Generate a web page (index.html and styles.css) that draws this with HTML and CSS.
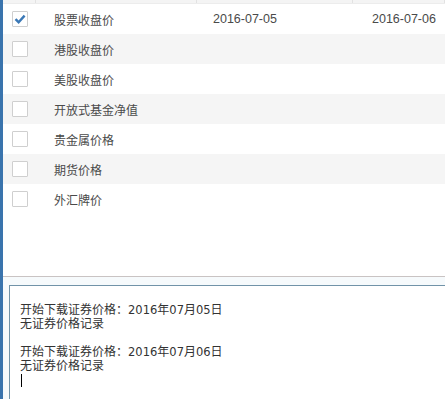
FILE: index.html
```html
<!DOCTYPE html>
<html lang="zh-CN">
<head>
    <meta charset="UTF-8">
    <meta name="viewport" content="width=device-width, initial-scale=1.0">
    <title>证券价格下载</title>
    <link rel="stylesheet" href="styles.css">
</head>
<body>

    <div class="side-bar"></div>

    <div class="main">
        <div class="grid-head">
            <span></span><span></span><span></span><span></span>
        </div>

        <div class="grid-body">
            <div class="row">
                <div class="cell"><span class="check checked">
                    <svg width="12" height="10" viewBox="0 0 12 10"><path d="M1.5 5.2 L4.6 8.2 L10.6 1.6" fill="none" stroke="#3a78b6" stroke-width="2.4"/></svg>
                </span></div>
                <div class="cell label">股票收盘价</div>
                <div class="cell date">2016-07-05</div>
                <div class="cell date last">2016-07-06</div>
            </div>
            <div class="row">
                <div class="cell"><span class="check"></span></div>
                <div class="cell label">港股收盘价</div>
                <div class="cell"></div>
                <div class="cell"></div>
            </div>
            <div class="row">
                <div class="cell"><span class="check"></span></div>
                <div class="cell label">美股收盘价</div>
                <div class="cell"></div>
                <div class="cell"></div>
            </div>
            <div class="row">
                <div class="cell"><span class="check"></span></div>
                <div class="cell label">开放式基金净值</div>
                <div class="cell"></div>
                <div class="cell"></div>
            </div>
            <div class="row">
                <div class="cell"><span class="check"></span></div>
                <div class="cell label">贵金属价格</div>
                <div class="cell"></div>
                <div class="cell"></div>
            </div>
            <div class="row">
                <div class="cell"><span class="check"></span></div>
                <div class="cell label">期货价格</div>
                <div class="cell"></div>
                <div class="cell"></div>
            </div>
            <div class="row">
                <div class="cell"><span class="check"></span></div>
                <div class="cell label">外汇牌价</div>
                <div class="cell"></div>
                <div class="cell"></div>
            </div>
        </div>

        <div class="log-panel">
            <div class="log-box">
                <p>开始下载证券价格：<span class="num">2016</span>年<span class="num">07</span>月<span class="num">05</span>日</p>
                <p>无证券价格记录</p>
                <p>&nbsp;</p>
                <p>开始下载证券价格：<span class="num">2016</span>年<span class="num">07</span>月<span class="num">06</span>日</p>
                <p>无证券价格记录</p>
                <p><span class="caret"></span></p>
            </div>
        </div>
    </div>

</body>
</html>
```

FILE: styles.css
```css
body {
    margin: 0;
    height: 399px;
    display: flex;
    background-color: white;
    font-family: "Liberation Sans", "Noto Sans CJK SC", sans-serif;
    font-size: 12px;
    overflow: hidden;
}

.side-bar {
    width: 3px;
    background-color: #3a74ad;
}

.main {
    flex: 1;
    display: flex;
    flex-direction: column;
}

.grid-head,
.row {
    display: grid;
    grid-template-columns: 33px 161px 156px 1fr;
}

.grid-head {
    height: 3px;
    background-color: #f4f4f4;
    border-bottom: 1px solid #ececec;
}

.grid-head span {
    border-right: 1px solid #e2e2e2;
}

.grid-body {
    flex: 1;
}

.row {
    height: 30px;
    align-items: center;
}

.row:nth-child(even) {
    background-color: #f5f5f5;
}

.cell {
    height: 30px;
    display: flex;
    align-items: center;
}

.label {
    padding-left: 18px;
    color: #4a4a4a;
}

.date {
    padding-left: 16px;
    color: #4a4a4a;
    font-size: 12.5px;
}

.date.last {
    padding-left: 19px;
}

.check {
    margin-left: 9px;
    width: 14px;
    height: 14px;
    border: 1px solid #cfcfcf;
    border-radius: 1px;
    background-color: white;
    display: flex;
    align-items: center;
    justify-content: center;
}

.log-panel {
    height: 123px;
    border-top: 1px solid #c9c3c3;
    background-color: #f6fafc;
    padding: 8px 0 0 6px;
    box-sizing: border-box;
}

.log-box {
    height: 100%;
    border-top: 1px solid #7193a8;
    border-left: 1px solid #7193a8;
    background-color: white;
    padding: 17px 0 0 10px;
    box-sizing: border-box;
    color: #333;
    font-family: "DejaVu Sans", "Noto Sans CJK SC", sans-serif;
}

.log-box p {
    margin: 0;
    line-height: 14px;
}

.num {
    font-size: 11.5px;
}

.caret {
    display: inline-block;
    width: 1px;
    height: 13px;
    margin-left: 1px;
    background-color: black;
    vertical-align: middle;
}
```
